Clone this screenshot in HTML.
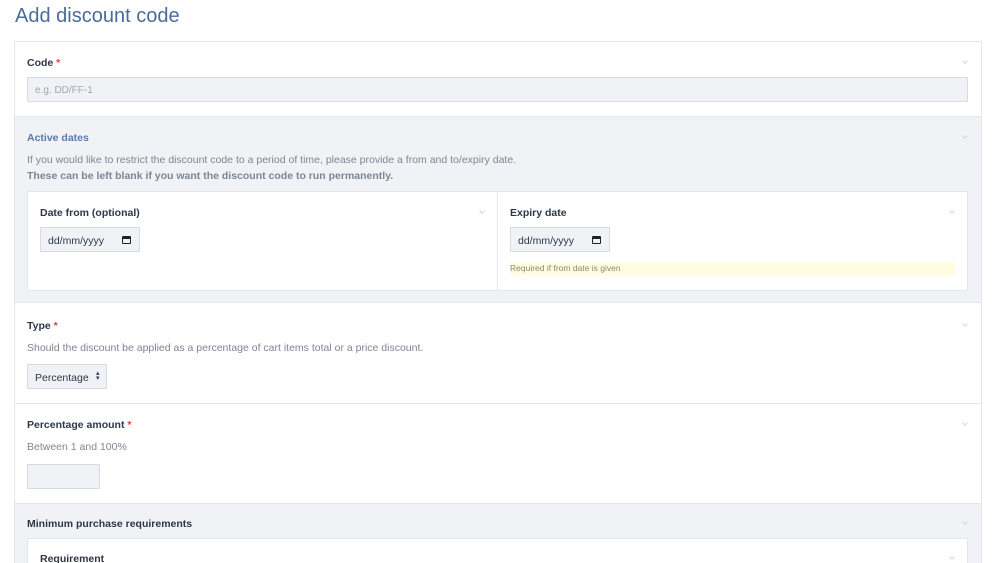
<!DOCTYPE html>
<html style="overflow:hidden;height:563px"><head><meta charset="utf-8"><style>
*{box-sizing:border-box;margin:0;padding:0}
body{width:1000px;height:563px;overflow:hidden;background:#fff;font-family:"Liberation Sans",sans-serif;position:relative;color:#2d3748}
.a{position:absolute}
h1{position:absolute;left:15px;top:5px;font-size:20px;font-weight:normal;color:#4a6b9b}
.lbl{font-size:10.5px;font-weight:bold;color:#2d3748}
.star{color:#e53e3e}
.desc{font-size:10.5px;color:#7d8694}
.inp{background:#f0f2f5;border:1px solid #d5dbe3;border-radius:1px}
.chev{position:absolute;width:4px;height:4px;border-right:1px solid #d3d8de;border-bottom:1px solid #d3d8de;transform:rotate(45deg)}
.date{font-size:10.5px;color:#2d3748;padding:7px 0 0 7px}
.cal{position:absolute;right:8px;top:8px;width:9px;height:8px;border:1.5px solid #222;border-top-width:3px;border-radius:1px}
</style></head><body>
<h1>Add discount code</h1>
<div class="a" style="left:14px;top:41px;width:968px;height:530px;border:1px solid #e3e7ec;background:#fff"></div>
<div class="a" style="left:15px;top:116px;width:966px;height:187px;background:#f0f2f5;border-top:1px solid #e3e7ec;border-bottom:1px solid #e3e7ec"></div>
<div class="a" style="left:15px;top:403px;width:966px;height:1px;background:#e3e7ec"></div>
<div class="a" style="left:15px;top:503px;width:966px;height:70px;background:#f0f2f5;border-top:1px solid #e3e7ec"></div>

<div class="a lbl" style="left:27px;top:57px">Code <span class="star">*</span></div>
<div class="chev" style="left:963px;top:59px"></div>
<div class="a inp" style="left:27px;top:77px;width:941px;height:25px;font-size:10px;color:#a0a8b4;padding:7px 0 0 7px">e.g. DD/FF-1</div>

<div class="a lbl" style="left:27px;top:132px;color:#5a7aa8">Active dates</div>
<div class="chev" style="left:963px;top:134px"></div>
<div class="a desc" style="left:27px;top:154px">If you would like to restrict the discount code to a period of time, please provide a from and to/expiry date.</div>
<div class="a desc" style="left:27px;top:170px;font-weight:bold">These can be left blank if you want the discount code to run permanently.</div>

<div class="a" style="left:27px;top:191px;width:941px;height:100px;background:#fff;border:1px solid #e3e7ec"></div>
<div class="a" style="left:497px;top:192px;width:1px;height:98px;background:#e3e7ec"></div>
<div class="a lbl" style="left:40px;top:207px">Date from (optional)</div>
<div class="chev" style="left:480px;top:209px"></div>
<div class="a inp date" style="left:40px;top:227px;width:100px;height:25px">dd/mm/yyyy<span class="cal"></span></div>
<div class="a lbl" style="left:510px;top:207px">Expiry date</div>
<div class="chev" style="left:950px;top:209px"></div>
<div class="a inp date" style="left:510px;top:227px;width:100px;height:25px">dd/mm/yyyy<span class="cal"></span></div>
<div class="a" style="left:510px;top:262px;width:445px;height:13px;background:#fefde0;font-size:8.5px;color:#8a8a6a;padding:1px 0 0 0">Required if from date is given</div>

<div class="a lbl" style="left:27px;top:320px">Type <span class="star">*</span></div>
<div class="chev" style="left:963px;top:322px"></div>
<div class="a desc" style="left:27px;top:342px">Should the discount be applied as a percentage of cart items total or a price discount.</div>
<div class="a inp" style="left:27px;top:364px;width:80px;height:25px;font-size:10.5px;padding:7px 0 0 7px">Percentage <span style="position:absolute;left:68px;top:6px;font-size:7px;line-height:5px">▴<br>▾</span></div>

<div class="a lbl" style="left:27px;top:419px">Percentage amount <span class="star">*</span></div>
<div class="chev" style="left:963px;top:421px"></div>
<div class="a desc" style="left:27px;top:441px">Between 1 and 100%</div>
<div class="a inp" style="left:27px;top:464px;width:73px;height:25px"></div>

<div class="a lbl" style="left:27px;top:518px">Minimum purchase requirements</div>
<div class="chev" style="left:963px;top:520px"></div>
<div class="a" style="left:27px;top:538px;width:941px;height:40px;background:#fff;border:1px solid #e3e7ec"></div>
<div class="a lbl" style="left:40px;top:553px">Requirement</div>
<div class="chev" style="left:950px;top:555px"></div>
</body></html>
